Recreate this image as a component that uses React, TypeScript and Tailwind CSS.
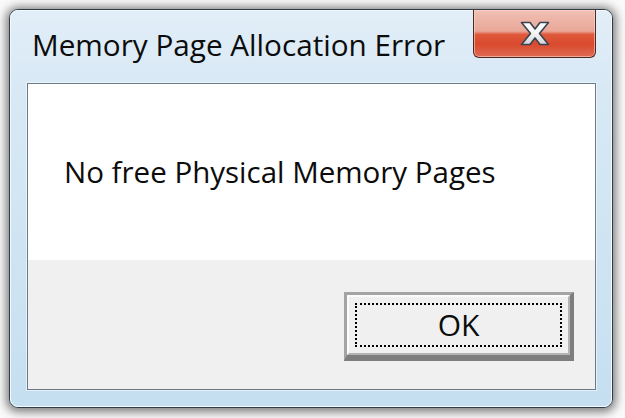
import React from "react";

const FONT = { fontFamily: '"Open Sans", "Noto Sans", "Liberation Sans", sans-serif' };

function CloseGlyph() {
  return (
    <svg width="30" height="25" viewBox="0 0 30 25">
      <defs>
        <linearGradient id="xg" x1="0" y1="0" x2="0" y2="1">
          <stop offset="0" stopColor="#ffffff" />
          <stop offset="0.5" stopColor="#f4f4f4" />
          <stop offset="1" stopColor="#cfd3d8" />
        </linearGradient>
      </defs>
      <polygon
        points="1.5,1.5 10,1.5 15,8 20,1.5 28.5,1.5 19.5,12.5 28.5,23.5 20,23.5 15,17 10,23.5 1.5,23.5 10.5,12.5"
        fill="url(#xg)"
        stroke="#3a4350"
        strokeWidth="1.6"
        strokeLinejoin="round"
      />
    </svg>
  );
}

export default function App() {
  return (
    <div className="w-[625px] h-[418px] bg-[#fafafa] pt-[9px] pl-[9px]" style={FONT}>
      <div className="w-[604px] h-[399px] rounded-[9px] border border-[#2f3d48] shadow-[0_1px_10px_3px_rgba(0,0,0,0.5)] bg-[linear-gradient(to_bottom,#e2eef8_0%,#d8e9f5_20%,#cfe4f2_60%,#c5dff1_100%)] flex">
        <div className="flex-1 rounded-[8px] border border-[#f3f9fd] flex flex-col pl-[16px] pr-[15px] pb-[16px]">
          <div className="h-[72px] flex justify-between items-start">
            <div className="ml-[5px] mt-[19px] text-[29.7px] leading-none text-[#0c0c0c]">
              Memory Page Allocation Error
            </div>
            <div className="-mt-[1px] w-[123px] h-[48px] rounded-b-[6px] border border-t-0 border-[#4b2a24] bg-[linear-gradient(to_bottom,#f0c0b5_0%,#e9a797_45%,#df5a3c_52%,#d9492d_72%,#e06b52_100%)] shadow-[inset_0_0_0_1px_rgba(255,220,210,0.55)] flex items-center justify-center">
              <CloseGlyph />
            </div>
          </div>
          <div className="flex-1 border border-[#6b7c88] flex flex-col shadow-[0_0_0_1px_rgba(255,255,255,0.5)]">
            <div className="h-[176px] bg-white pl-[36px] pt-[73px]">
              <div className="text-[29.5px] leading-none text-[#0c0c0c]">No free Physical Memory Pages</div>
            </div>
            <div className="flex-1 bg-[#f0f0f0] flex justify-end items-start pt-[32px] pr-[21px]">
              <div className="w-[230px] h-[69px] border-t-[3px] border-l-[3px] border-r-[4px] border-b-[6px] border-t-[#a4a4a4] border-l-[#a4a4a4] border-r-[#7e7e7e] border-b-[#7e7e7e] flex">
                <div className="flex-1 border-t-2 border-l-2 border-t-[#fbfbfb] border-l-[#fbfbfb] border-r-2 border-b-2 border-r-[#b4b4b4] border-b-[#b4b4b4] bg-[#f0f0f0] p-[6px] flex">
                  <div className="flex-1 border-2 border-dotted border-black flex items-center justify-center">
                    <span className="text-[30px] leading-none text-[#0c0c0c]">OK</span>
                  </div>
                </div>
              </div>
            </div>
          </div>
        </div>
      </div>
    </div>
  );
}
